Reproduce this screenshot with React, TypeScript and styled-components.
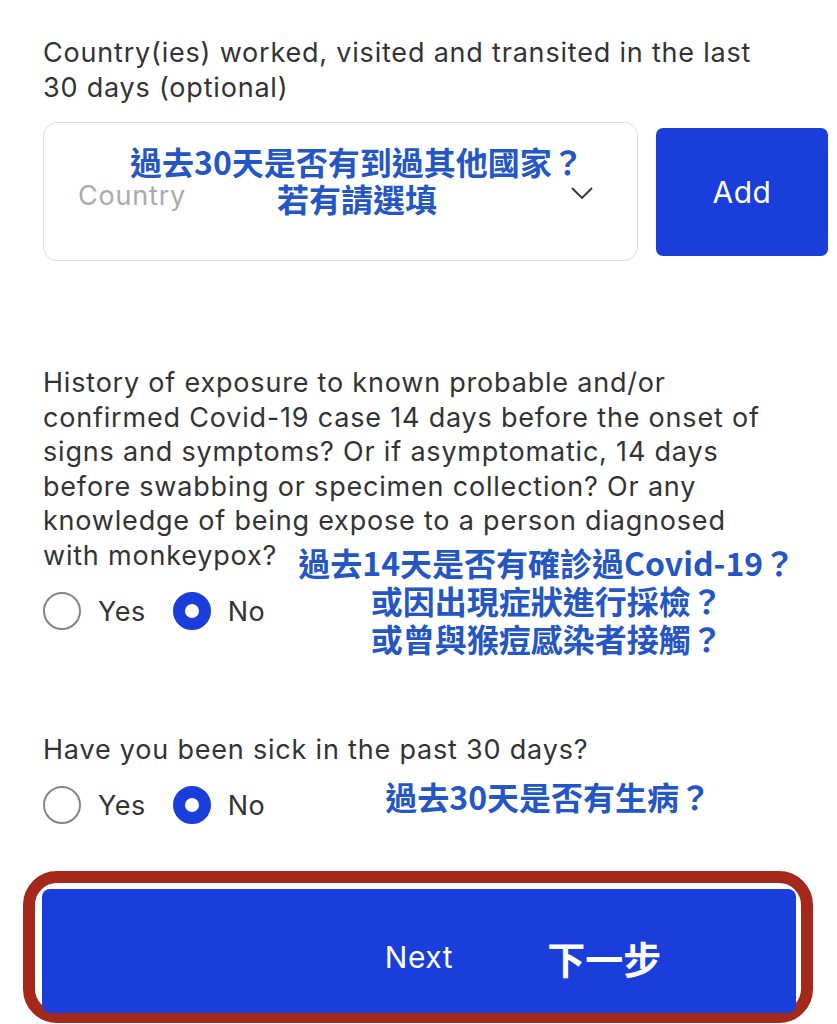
import React, { useState } from 'react'
import styled, { createGlobalStyle } from 'styled-components'

const GlobalStyle = createGlobalStyle`
  html, body {
    margin: 0;
    padding: 0;
    background: #ffffff;
  }
  body {
    font-family: Inter, Roboto, "Liberation Sans", Arial, sans-serif;
    color: #333333;
    overflow: hidden;
  }
`

type Answer = 'yes' | 'no'

export default function App() {
  const [exposed, setExposed] = useState<Answer>('no')
  const [sick, setSick] = useState<Answer>('no')

  return (
    <Page>
      <GlobalStyle />
      <Section>
        <Question>
          Country(ies) worked, visited and transited in the last
          <br />
          30 days (optional)
        </Question>
        <CountryRow>
          <SelectBox>
            <Placeholder>Country</Placeholder>
            <Chevron viewBox="0 0 22 12" aria-hidden>
              <path d="M1 1l10 10L21 1" fill="none" stroke="#333" strokeWidth="1.8" />
            </Chevron>
            <BoxNote>
              過去30天是否有到過其他國家？
              <br />
              若有請選填
            </BoxNote>
          </SelectBox>
          <AddButton type="button">Add</AddButton>
        </CountryRow>
      </Section>

      <Section $gap={105}>
        <Question>
          History of exposure to known probable and/or
          <br />
          confirmed Covid-19 case 14 days before the onset of
          <br />
          signs and symptoms? Or if asymptomatic, 14 days
          <br />
          before swabbing or specimen collection? Or any
          <br />
          knowledge of being expose to a person diagnosed
        </Question>
        <AnnotatedRow>
          <LeftCol>
            <Question>with monkeypox?</Question>
            <RadioGroup value={exposed} onChange={setExposed} />
          </LeftCol>
          <Note $offset={4}>
            過去14天是否有確診過Covid-19？
            <br />
            或因出現症狀進行採檢？
            <br />
            或曾與猴痘感染者接觸？
          </Note>
        </AnnotatedRow>
      </Section>

      <Section $gap={76}>
        <Question>Have you been sick in the past 30 days?</Question>
        <AnswerRow>
          <RadioGroup value={sick} onChange={setSick} />
          <Note $offset={0} $left={93}>過去30天是否有生病？</Note>
        </AnswerRow>
      </Section>

      <Highlight>
        <NextButton type="button">
          <span />
          <NextLabel>Next</NextLabel>
          <NextNote>下一步</NextNote>
        </NextButton>
      </Highlight>
    </Page>
  )
}

function RadioGroup(props: { value: Answer; onChange(v: Answer): void }) {
  const { value, onChange } = props
  return (
    <Radios>
      <RadioOption onClick={() => onChange('yes')}>
        <RadioDot $checked={value === 'yes'} />
        <RadioText>Yes</RadioText>
      </RadioOption>
      <RadioOption onClick={() => onChange('no')}>
        <RadioDot $checked={value === 'no'} />
        <RadioText>No</RadioText>
      </RadioOption>
    </Radios>
  )
}

const Page = styled.div`
  width: 837px;
  box-sizing: border-box;
  padding: 36px 9px 0 43px;
  background: #fff;
`

const Section = styled.section<{ $gap?: number }>`
  display: flex;
  flex-direction: column;
  margin-top: ${(p) => p.$gap || 0}px;
`

const Question = styled.p`
  margin: 0;
  font-size: 27px;
  line-height: 34.5px;
  letter-spacing: 0.8px;
  color: #333;
  white-space: nowrap;
`

const CountryRow = styled.div`
  display: flex;
  align-items: center;
  gap: 18px;
  margin-top: 17px;
`

const SelectBox = styled.div`
  position: relative;
  box-sizing: border-box;
  width: 595px;
  height: 139px;
  border: 1.5px solid #dddddd;
  border-radius: 14px;
  display: flex;
  align-items: center;
  justify-content: space-between;
  padding: 8px 44px 0 34px;
`

const Placeholder = styled.span`
  font-size: 27px;
  letter-spacing: 0.8px;
  color: #ababab;
`

const Chevron = styled.svg`
  width: 22px;
  height: 12px;
  margin-top: -6px;
`

const BoxNote = styled.div`
  position: absolute;
  top: 20px;
  left: 33px;
  right: 0;
  text-align: center;
  font-family: "Noto Sans CJK TC", "Noto Sans CJK SC", sans-serif;
  font-weight: 700;
  font-size: 32px;
  line-height: 37px;
  color: #2456c6;
`

const AddButton = styled.button`
  width: 172px;
  height: 128px;
  border: none;
  border-radius: 7px;
  background: #1a3edb;
  color: #fff;
  font-family: Inter, Roboto, "Liberation Sans", Arial, sans-serif;
  font-size: 30px;
  letter-spacing: 0.5px;
  padding: 0;
`

const AnnotatedRow = styled.div`
  display: flex;
  align-items: flex-start;
  gap: 6px;
`

const LeftCol = styled.div`
  display: flex;
  flex-direction: column;
`

const AnswerRow = styled.div`
  display: flex;
  align-items: center;
`

const Note = styled.div<{ $offset: number; $left?: number }>`
  margin-top: ${(p) => p.$offset}px;
  margin-left: ${(p) => p.$left || 0}px;
  text-align: center;
  font-family: "Noto Sans CJK TC", "Noto Sans CJK SC", sans-serif;
  font-weight: 700;
  font-size: 32px;
  line-height: 38px;
  color: #2456c6;
  white-space: nowrap;
`

const Radios = styled.div`
  display: flex;
  align-items: center;
  margin-top: 19px;
  height: 38px;
`

const RadioOption = styled.label`
  display: flex;
  align-items: center;
  cursor: pointer;
  margin-right: 27px;
`

const RadioDot = styled.span<{ $checked: boolean }>`
  box-sizing: border-box;
  width: 38px;
  height: 38px;
  border-radius: 50%;
  border: ${(p) => (p.$checked ? '12px solid #1a3edb' : '2.5px solid #858585')};
  background: #fff;
`

const RadioText = styled.span`
  margin-left: 17px;
  font-size: 27px;
  letter-spacing: 0.5px;
  color: #333;
`

const Highlight = styled.div`
  box-sizing: border-box;
  width: 790px;
  height: 152px;
  margin: 47px 0 0 -20px;
  border: 12px solid #a5291b;
  border-radius: 34px;
  padding: 6px 5px 0 7px;
`

const NextButton = styled.button`
  width: 100%;
  height: 124px;
  border: none;
  border-radius: 8px;
  background: #1a3edb;
  color: #fff;
  display: grid;
  grid-template-columns: 1fr auto 1fr;
  align-items: center;
  padding: 12px 0 0;
  font-family: Inter, Roboto, "Liberation Sans", Arial, sans-serif;
`

const NextLabel = styled.span`
  font-size: 30px;
  letter-spacing: 0.6px;
`

const NextNote = styled.span`
  justify-self: start;
  padding-left: 94px;
  font-family: "Noto Sans CJK TC", "Noto Sans CJK SC", sans-serif;
  font-weight: 700;
  font-size: 38px;
`
